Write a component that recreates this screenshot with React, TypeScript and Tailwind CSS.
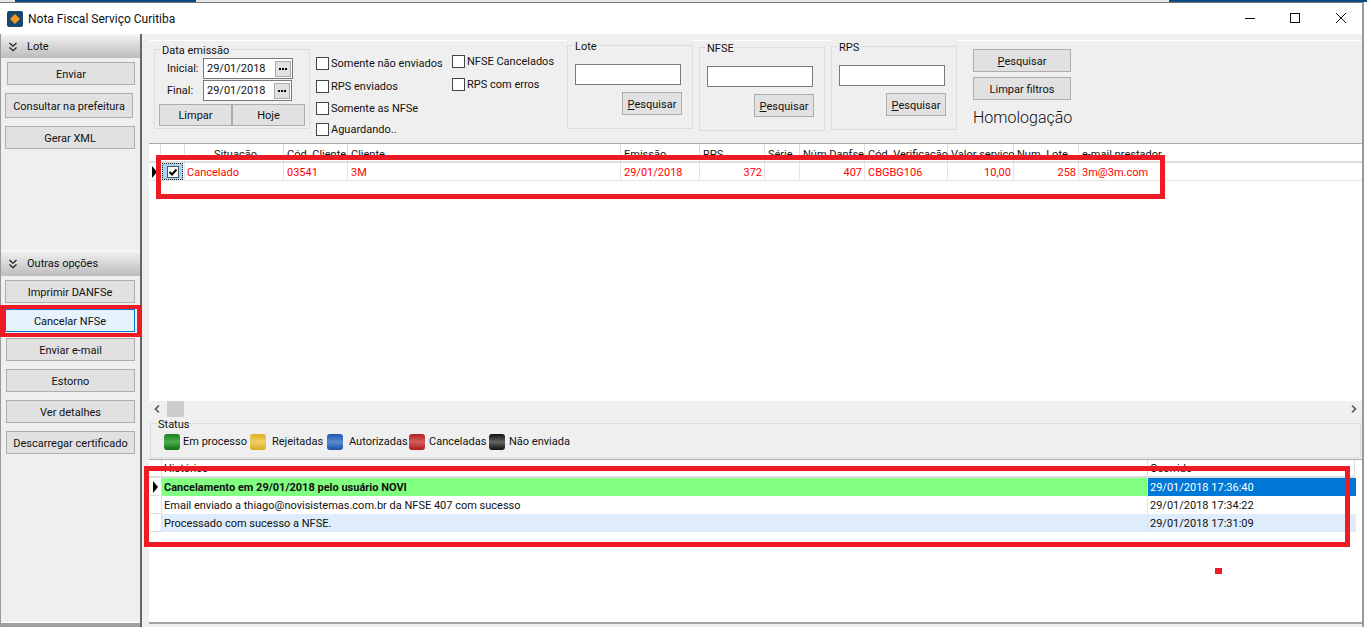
const Btn = ({ label, className = '', u = false }: { label: string; className?: string; u?: boolean }) => (
  <button className={`bg-[#e1e1e1] border border-[#adadad] text-[#111] text-[11px] leading-none pt-px flex items-center justify-center shrink-0 ${className}`}>
    {u ? (
      <span>
        <span className="underline">P</span>
        {label.slice(1)}
      </span>
    ) : (
      label
    )}
  </button>
);

const SectionHead = ({ label, className = '' }: { label: string; className?: string }) => (
  <div className={`bg-gradient-to-b from-[#f2f2f2] to-[#bcbcbc] border-t border-[#fafafa] flex items-center pl-[7px] gap-[9px] text-[11px] text-[#111] shrink-0 ${className}`}>
    <svg width="10" height="10" viewBox="0 0 10 10" fill="none" stroke="#222" strokeWidth="1.3">
      <path d="M1.5 1 5 4.2 8.5 1M1.5 5.5 5 8.7 8.5 5.5" />
    </svg>
    <span className="pt-[2px]">{label}</span>
  </div>
);

const Check = ({ label, className = '' }: { label: string; className?: string }) => (
  <label className={`flex items-center gap-[2px] text-[11px] text-[#111] h-[15px] ${className}`}>
    <span className="w-[13px] h-[13px] bg-white border border-[#444] shrink-0" />
    <span className="pt-[2px]">{label}</span>
  </label>
);

const SearchGroup = ({ title, className = '' }: { title: string; className?: string }) => (
  <div className={`relative w-[126px] h-[84px] border border-[#dcdcdc] shrink-0 pt-[18px] ${className}`}>
    <span className="absolute left-[6px] -top-[6px] bg-[#efefef] px-px text-[11px] leading-[14px] text-[#111]">{title}</span>
    <div className="ml-[7px] w-[106px] h-[21px] bg-white border border-[#7a7a7a]" />
    <Btn label="Pesquisar" u className="w-[60px] h-[23px] ml-[54px] mt-[7px]" />
  </div>
);

const DateField = ({ label, className = '', w }: { label: string; className?: string; w: string }) => (
  <div className={`flex items-center ${className}`}>
    <span className="w-[48px] pl-[12px] pt-[2px]">{label}</span>
    <div className={`${w} h-[21px] bg-white border border-[#7a7a7a] flex items-center pl-[3px] justify-between pr-px`}>
      <span className="pt-[2px]">29/01/2018</span>
      <span className="w-[16px] h-[16px] bg-[#e1e1e1] border border-[#aaa] flex items-center justify-center gap-px">
        <span className="w-[2px] h-[2px] bg-black" />
        <span className="w-[2px] h-[2px] bg-black" />
        <span className="w-[2px] h-[2px] bg-black" />
      </span>
    </div>
  </div>
);

const cols1 = [
  { t: 'Situação', w: 'w-[99px]', r: 'Cancelado', h: 'justify-center', a: 'pl-[2px]' },
  { t: 'Cód. Cliente', w: 'w-[64px]', r: '03541', h: '', a: 'pl-[3px]' },
  { t: 'Cliente', w: 'w-[273px]', r: '3M', h: '', a: 'pl-[3px]' },
  { t: 'Emissão', w: 'w-[79px]', r: '29/01/2018', h: '', a: 'pl-[3px]' },
  { t: 'RPS', w: 'w-[65px]', r: '372', h: '', a: 'justify-end' },
  { t: 'Série', w: 'w-[35px]', r: '', h: '', a: '' },
  { t: 'Núm Danfse', w: 'w-[65px]', r: '407', h: '', a: 'justify-end' },
  { t: 'Cód. Verificação', w: 'w-[83px]', r: 'CBGBG106', h: '', a: 'pl-[3px]' },
  { t: 'Valor serviço', w: 'w-[66px]', r: '10,00', h: '', a: 'justify-end' },
  { t: 'Num. Lote', w: 'w-[65px]', r: '258', h: '', a: 'justify-end' },
  { t: 'e-mail prestador', w: 'w-[130px]', r: '3m@3m.com', h: '', a: 'pl-[3px]' },
];

const Triangle = () => <span className="w-0 h-0 border-y-[6px] border-y-transparent border-l-[5px] border-l-black" />;

const Legend = ({ color, label, className = '', gap }: { color: string; label: string; className?: string; gap: string }) => (
  <div className={`flex items-center ${gap} ${className}`}>
    <span className={`w-4 h-4 rounded-[3px] ${color}`} />
    <span className="pt-px">{label}</span>
  </div>
);

const hist = [
  { t: 'Cancelamento em 29/01/2018 pelo usuário NOVI', d: '29/01/2018 17:36:40', bg: 'bg-[#80ff80] font-bold', dbg: 'bg-[#0078d7] text-white', arrow: true },
  { t: 'Email enviado a thiago@novisistemas.com.br da NFSE 407 com sucesso', d: '29/01/2018 17:34:22', bg: 'bg-white', dbg: 'bg-white', arrow: false },
  { t: 'Processado com sucesso a NFSE.', d: '29/01/2018 17:31:09', bg: 'bg-[#deecfb]', dbg: 'bg-[#deecfb]', arrow: false },
];

export default function App() {
  return (
    <div className="relative w-[1367px] h-[627px] overflow-hidden bg-white font-['Roboto',sans-serif] flex flex-col">
      {/* pedaco da janela de tras */}
      <div className="h-[2px] flex bg-[#e6e6e6] shrink-0">
        <div className="w-[15px]" />
        <div className="w-[181px] bg-[#0b4a80]" />
        <div className="w-[973px]" />
        <div className="flex-1 bg-[#0b4a80]" />
      </div>
      <div className="w-[1364px] flex-1 flex flex-col border-t border-[#777] border-r-2 border-r-[#999] min-h-0">
        {/* titulo */}
        <div className="h-[31px] bg-white flex items-center shrink-0 pl-[7px]">
          <svg width="16" height="16" viewBox="0 0 16 16">
            <rect width="16" height="16" rx="2" fill="#17476f" />
            <path d="M8 3 13 8 8 13 3 8Z" fill="#f39a1e" />
          </svg>
          <span className="ml-[5px] text-[12px] text-[#111]">Nota Fiscal Serviço Curitiba</span>
          <div className="ml-auto flex items-center mb-[2px]">
            <svg width="10" height="10" viewBox="0 0 10 10" className="mr-[35px]"><path d="M0 5.5H10" stroke="#111" /></svg>
            <svg width="10" height="10" viewBox="0 0 10 10" className="mr-[36px]"><rect x=".5" y=".5" width="9" height="9" fill="none" stroke="#111" /></svg>
            <svg width="10" height="10" viewBox="0 0 10 10" className="mr-[16px]"><path d="M0 0 10 10M10 0 0 10" stroke="#111" /></svg>
          </div>
        </div>

        <div className="flex-1 flex min-h-0">
          {/* menu lateral */}
          <aside className="w-[142px] shrink-0 bg-[#efefef] border-l border-[#999] border-r-2 border-r-[#666] flex flex-col">
            <SectionHead label="Lote" className="h-[24px]" />
            <Btn label="Enviar" className="w-[128px] h-[23px] ml-[6px] mt-[4px]" />
            <Btn label="Consultar na prefeitura" className="w-[128px] h-[25px] ml-[4px] mt-[8px]" />
            <Btn label="Gerar XML" className="w-[130px] h-[23px] ml-[4px] mt-[8px]" />
            <div className="mt-[101px]" />
            <SectionHead label="Outras opções" className="h-[26px]" />
            <Btn label="Imprimir DANFSe" className="w-[130px] h-[23px] ml-[4px] mt-[4px]" />
            <Btn label="Cancelar NFSe" className="w-[130px] h-[23px] ml-[4px] mt-[6px] !bg-[#e5f1fb] !border-[#0078d7]" />
            <Btn label="Enviar e-mail" className="w-[129px] h-[23px] ml-[5px] mt-[6px]" />
            <Btn label="Estorno" className="w-[129px] h-[23px] ml-[5px] mt-[8px]" />
            <Btn label="Ver detalhes" className="w-[129px] h-[23px] ml-[5px] mt-[8px]" />
            <Btn label="Descarregar certificado" className="w-[129px] h-[23px] ml-[5px] mt-[8px]" />
            <div className="mt-auto h-[5px] bg-[#a0a0a0] border-t border-white" />
          </aside>

          <main className="flex-1 min-w-0 bg-[#efefef] pl-[7px] flex flex-col">
            {/* filtros */}
            <div className="h-[110px] shrink-0 flex flex-col border-b border-[#aaa]">
              <div className="h-[6px] shrink-0" />
              <div className="h-px flex shrink-0">
                <div className="w-[418px] bg-white" />
                <div className="w-[126px]" />
                <div className="w-[138px] bg-white" />
                <div className="w-[126px]" />
                <div className="w-[405px] bg-white" />
              </div>
              <div className="flex items-start pl-[5px]">
                <div className="relative w-[156px] h-[80px] mt-[8px] border border-[#dcdcdc] shrink-0 text-[11px] text-[#111]">
                  <span className="absolute left-[6px] -top-[6px] bg-[#efefef] px-px leading-[14px]">Data emissão</span>
                  <DateField label="Inicial:" w="w-[90px]" className="mt-[8px]" />
                  <DateField label="Final:" w="w-[89px]" className="mt-px" />
                  <div className="flex ml-[4px] mt-[3px]">
                    <Btn label="Limpar" className="w-[73px] h-[22px]" />
                    <Btn label="Hoje" className="w-[73px] h-[22px]" />
                  </div>
                </div>
                <div className="w-[136px] ml-[6px] mt-[15px] flex flex-col shrink-0">
                  <Check label="Somente não enviados" />
                  <Check label="RPS enviados" className="mt-[8px]" />
                  <Check label="Somente as NFSe" className="mt-[7px]" />
                  <Check label="Aguardando.." className="mt-[6px]" />
                </div>
                <div className="w-[115px] mt-[13px] flex flex-col gap-[8px] shrink-0">
                  <Check label="NFSE Cancelados" />
                  <Check label="RPS com erros" />
                </div>
                <SearchGroup title="Lote" className="mt-[4px]" />
                <SearchGroup title="NFSE" className="mt-[6px] ml-[6px]" />
                <SearchGroup title="RPS" className="mt-[5px] ml-[6px]" />
                <div className="ml-[16px] mt-[8px] flex flex-col shrink-0">
                  <Btn label="Pesquisar" u className="w-[98px] h-[23px]" />
                  <Btn label="Limpar filtros" className="w-[98px] h-[23px] mt-[5px]" />
                  <span className="text-[16px] font-light leading-[22px] text-[#111] mt-[7px]">Homologação</span>
                </div>
              </div>
            </div>

            {/* grade de notas */}
            <div className="h-[257px] shrink-0 bg-white flex flex-col text-[11px]">
              <div className="h-[19px] flex border-b-2 border-[#ddd] shrink-0 text-[#111] overflow-hidden">
                <div className="w-[12px] border-r border-[#ddd]" />
                <div className="w-[24px] border-r border-[#ddd]" />
                {cols1.map((c) => (
                  <div key={c.t} className={`${c.w} flex ${c.h} pl-[3px] pt-[3px] border-r border-[#ddd] whitespace-nowrap last:border-r-0`}>
                    {c.t}
                  </div>
                ))}
              </div>
              <div className="h-[18px] flex border-b border-[#e4e4e4] text-[#f00] shrink-0 items-stretch">
                <div className="w-[12px] flex items-center justify-center border-r border-[#e4e4e4]">
                  <Triangle />
                </div>
                <div className="w-[24px] border-r border-[#e4e4e4] flex items-center justify-center">
                  <span className="w-[21px] h-[17px] bg-[#a8d4f5] border border-dotted border-[#222] flex items-center justify-center">
                    <span className="w-[12px] h-[12px] bg-white border border-[#555] flex items-center justify-center">
                      <svg width="10" height="10" viewBox="0 0 10 10"><path d="M1.5 5 4 7.5 8.5 2.5" fill="none" stroke="#000" strokeWidth="2" /></svg>
                    </span>
                  </span>
                </div>
                {cols1.map((c) => (
                  <div key={c.t} className={`${c.w} flex items-center ${c.a} pr-[2px] pt-[3px] border-r border-[#e4e4e4] whitespace-nowrap last:border-r-0`}>
                    {c.r}
                  </div>
                ))}
              </div>
            </div>

            {/* barra de rolagem */}
            <div className="h-[16px] shrink-0 flex items-center bg-[#f0f0f0]">
              <svg width="18" height="16" viewBox="0 0 18 16"><path d="M10 4.5 6.5 8 10 11.5" fill="none" stroke="#555" strokeWidth="1.6" /></svg>
              <div className="w-[17px] h-[16px] bg-[#cdcdcd]" />
              <svg width="12" height="16" viewBox="0 0 12 16" className="ml-auto mr-[2px]"><path d="M4 4.5 7.5 8 4 11.5" fill="none" stroke="#555" strokeWidth="1.6" /></svg>
            </div>

            {/* status */}
            <div className="relative h-[35px] mt-[6px] ml-px mr-[1px] border border-[#dcdcdc] shrink-0 text-[11px] text-[#111]">
              <span className="absolute left-[6px] -top-[6px] bg-[#efefef] px-px leading-[14px]">Status</span>
              <div className="flex items-center pt-[9px] pl-[13px]">
                <Legend color="bg-gradient-to-b from-[#1c7f1c] via-[#4cae4c] to-[#0f6e0f]" label="Em processo" gap="gap-[3px]" className="w-[86px]" />
                <Legend color="bg-gradient-to-b from-[#e0b020] via-[#f0d060] to-[#d8a810]" label="Rejeitadas" gap="gap-[6px]" className="w-[77px]" />
                <Legend color="bg-gradient-to-b from-[#1e56b0] via-[#5a8ad0] to-[#1a4ea8]" label="Autorizadas" gap="gap-[6px]" className="w-[82px]" />
                <Legend color="bg-gradient-to-b from-[#b01c1c] via-[#d85a5a] to-[#a81818]" label="Canceladas" gap="gap-[4px]" className="w-[80px]" />
                <Legend color="bg-gradient-to-b from-[#111] via-[#666] to-[#111]" label="Não enviada" gap="gap-[4px]" />
              </div>
            </div>

            {/* historico */}
            <div className="flex-1 min-h-0 mt-[1px] bg-white border-t border-[#aaa] flex flex-col text-[11px] text-[#111]">
              <div className="h-[18px] flex border-b-2 border-[#ddd] shrink-0 w-[1206px] overflow-hidden">
                <div className="w-[12px] ml-px border-r border-[#ddd]" />
                <div className="w-[986px] pl-[2px] pt-px border-r border-[#ddd]">Histórico</div>
                <div className="flex-1 pl-[2px] pt-px border-r border-[#ddd]">Ocorrido</div>
              </div>
              {hist.map((h) => (
                <div key={h.d} className="h-[18px] flex shrink-0 w-[1206px] ml-px">
                  <div className="w-[12px] flex items-center justify-center border-b border-r border-[#ddd]">
                    {h.arrow && <Triangle />}
                  </div>
                  <div className={`w-[986px] pl-[2px] pt-[2px] flex items-center border-r border-[#e4e4e4] ${h.bg}`}>{h.t}</div>
                  <div className={`flex-1 pl-[2px] pt-[2px] flex items-center ${h.dbg}`}>{h.d}</div>
                </div>
              ))}
              <div className="mt-auto h-[5px] bg-[#efefef] border-t-2 border-[#a0a0a0]" />
            </div>
          </main>
        </div>
      </div>

      {/* marcacoes vermelhas */}
      <div className="absolute left-[156px] top-[155px] w-[1009px] h-[44px] border-[5px] border-[#ed1c24]" />
      <div className="absolute left-0 top-[305px] w-[142px] h-[32px] border-y-4 border-x-[5px] border-[#ed1c24]" />
      <div className="absolute left-[144px] top-[466px] w-[1206px] h-[81px] border-[5px] border-[#ed1c24]" />
      <div className="absolute left-[1215px] top-[568px] w-[7px] h-[6px] bg-[#ed1c24]" />
    </div>
  );
}
